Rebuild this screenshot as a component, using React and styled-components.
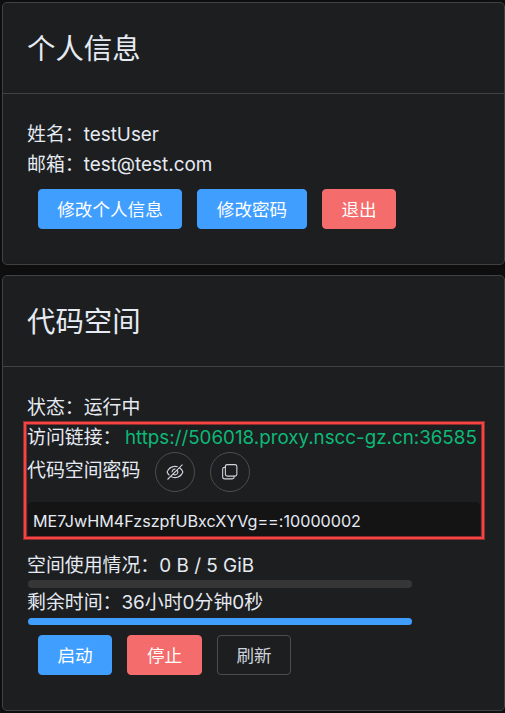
import React from 'react';
import styled, { createGlobalStyle } from 'styled-components';
import { IoCopyOutline } from 'react-icons/io5';

const GlobalStyle = createGlobalStyle`
  * { box-sizing: border-box; }
  body {
    margin: 0;
    background: #111111;
    color: #e5eaf3;
    font: 18.9px/30px Inter, "Noto Sans CJK SC", sans-serif;
  }
`;

const Page = styled.main`
  display: flex;
  flex-direction: column;
  gap: 10px;
  height: 713px;
  padding: 2px 0 0 2px;
  overflow: hidden;
`;

const Card = styled.section`
  flex: none;
  height: ${(p) => p.$height}px;
  border: 1px solid #414243;
  border-radius: 5px;
  background: #1d1e1f;
  box-shadow: 0 0 15px rgba(0, 0, 0, 0.3);
`;

const CardHeader = styled.header`
  height: 91px;
  padding: 25px 24px 0;
  border-bottom: 1px solid #414243;
`;

const Title = styled.h2`
  margin: 0;
  font-size: 28.4px;
  font-weight: 400;
  line-height: 42px;
`;

const CardBody = styled.div`
  padding: 25px 24px;
`;

const Line = styled.div`
  height: 30px;
  padding-top: ${(p) => (p.$tight ? 0 : 1)}px;
  white-space: nowrap;
`;

const Link = styled.a`
  margin-left: 3.5px;
  color: #0cb977;
  font-size: 18.78px;
  text-decoration: none;
`;

const Actions = styled.div`
  display: flex;
  gap: 15px;
  margin: 10px 0 0 11px;
`;

const tones = {
  primary: ['#409eff', '#409eff', '#ffffff'],
  danger: ['#f56c6c', '#f56c6c', '#ffffff'],
  plain: ['transparent', '#4c4d4f', '#cfd3dc'],
};

const Button = styled.button`
  width: ${(p) => p.$width}px;
  height: 40px;
  padding: 1px 0 0;
  border: 1px solid ${(p) => tones[p.$tone][1]};
  border-radius: 4px;
  background: ${(p) => tones[p.$tone][0]};
  color: ${(p) => tones[p.$tone][2]};
  font: inherit;
  font-size: 17.6px;
  white-space: nowrap;
`;

const Access = styled.div`
  position: relative;
  height: 128px;
`;

const Highlight = styled.div`
  position: absolute;
  inset: 0 auto auto -3px;
  width: 460px;
  height: 117px;
  border: 2px solid #f94242;
  box-shadow: 0 0 0 1px rgba(249, 66, 66, 0.5), inset 0 0 0 1px rgba(249, 66, 66, 0.5);
  pointer-events: none;
`;

const PasswordRow = styled.div`
  display: flex;
  align-items: center;
  height: 40px;
`;

const PasswordLabel = styled.span`
  width: 128px;
  margin-top: -2px;
`;

const CircleButton = styled.button`
  display: flex;
  align-items: center;
  justify-content: center;
  width: 40px;
  height: 40px;
  margin-right: 15px;
  padding: 0;
  border: 1px solid #4c4d4f;
  border-radius: 50%;
  background: transparent;
  color: #cfd3dc;
  font-size: 17.5px;
`;

const CopyIcon = styled(IoCopyOutline)`
  transform: scaleY(-1);
`;

const Password = styled.div`
  width: 452px;
  height: 37px;
  margin: 10px 0 0 1px;
  padding: 0 5px;
  border-radius: 5px;
  background: #141414;
  font-size: 16.15px;
  line-height: 38px;
`;

const Bar = styled.div`
  width: 384px;
  height: ${(p) => p.$height}px;
  margin-left: 1px;
  border-radius: 4px;
  background: ${(p) => (p.$filled ? '#409eff' : '#363637')};
`;

const EyeOff = () => (
  <svg width="18" height="18" viewBox="0 0 32 32" fill="currentColor">
    <path d="M5.24 22.51l1.43-1.42A14.06 14.06 0 0 1 3.07 16C5.1 10.93 10.7 7 16 7a12.38 12.38 0 0 1 4 .72l1.55-1.56A14.72 14.72 0 0 0 16 5 16.69 16.69 0 0 0 1.06 15.66a1 1 0 0 0 0 .68 16 16 0 0 0 4.18 6.17z" />
    <path d="M12 15.73a4 4 0 0 1 3.7-3.7l1.81-1.82a6 6 0 0 0-7.33 7.33z" />
    <path d="M30.94 15.66a16.4 16.4 0 0 0-5.74-7.44L30 3.41 28.59 2 2 28.59 3.41 30l5.1-5.1A15.29 15.29 0 0 0 16 27a16.69 16.69 0 0 0 14.94-10.66 1 1 0 0 0 0-.68zM20 16a4 4 0 0 1-6 3.44L19.44 14A4 4 0 0 1 20 16zm-4 9a13.05 13.05 0 0 1-6-1.58l2.54-2.54a6 6 0 0 0 8.35-8.35l2.87-2.87A14.54 14.54 0 0 1 28.93 16C26.9 21.07 21.3 25 16 25z" />
  </svg>
);

export default function App() {
  return (
    <>
      <GlobalStyle />
      <Page>
        <Card $height={263}>
          <CardHeader><Title>个人信息</Title></CardHeader>
          <CardBody>
            <Line>姓名：testUser</Line>
            <Line>邮箱：test@test.com</Line>
            <Actions>
              <Button $tone="primary" $width={144}>修改个人信息</Button>
              <Button $tone="primary" $width={110}>修改密码</Button>
              <Button $tone="danger" $width={74}>退出</Button>
            </Actions>
          </CardBody>
        </Card>
        <Card $height={436}>
          <CardHeader><Title>代码空间</Title></CardHeader>
          <CardBody>
            <Line>状态：运行中</Line>
            <Access>
              <Line>访问链接：<Link href="#">https://506018.proxy.nscc-gz.cn:36585</Link></Line>
              <PasswordRow>
                <PasswordLabel>代码空间密码</PasswordLabel>
                <CircleButton aria-label="显示密码"><EyeOff /></CircleButton>
                <CircleButton aria-label="复制密码"><CopyIcon /></CircleButton>
              </PasswordRow>
              <Password>ME7JwHM4FzszpfUBxcXYVg==:10000002</Password>
              <Highlight />
            </Access>
            <Line>空间使用情况：0 B / 5 GiB</Line>
            <Bar $height={8} />
            <Line $tight>剩余时间：36小时0分钟0秒</Line>
            <Bar $height={7} $filled />
            <Actions>
              <Button $tone="primary" $width={74}>启动</Button>
              <Button $tone="danger" $width={75}>停止</Button>
              <Button $tone="plain" $width={74}>刷新</Button>
            </Actions>
          </CardBody>
        </Card>
      </Page>
    </>
  );
}
